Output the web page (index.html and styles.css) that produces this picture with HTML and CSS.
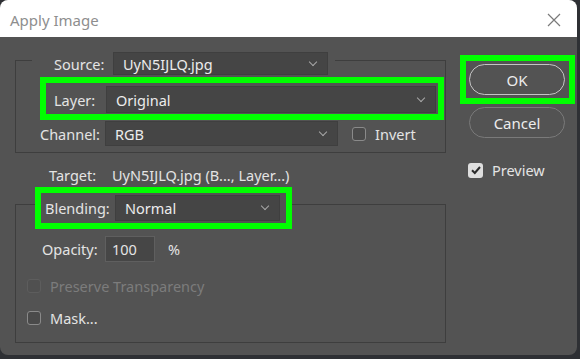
FILE: index.html
```html
<!DOCTYPE html>
<html lang="en">
<head>
  <meta charset="UTF-8" />
  <title>Apply Image</title>
  <link rel="stylesheet" href="styles.css">
</head>
<body>
  <div class="dialog">
    <div class="titlebar">
      <span class="title">Apply Image</span>
      <svg class="close" width="16" height="16" viewBox="0 0 16 16">
        <path d="M2 2 L14 14 M14 2 L2 14" stroke="#7a7a7a" stroke-width="1.2" fill="none" />
      </svg>
    </div>

    <div class="content">
      <div class="left">
        <!-- Source / Layer / Channel -->
        <div class="group group-source">
          <div class="legend-row">
            <span class="label">Source:</span>
            <div class="select select-source">UyN5IJLQ.jpg<span class="chev"></span></div>
          </div>
          <div class="hl hl-layer">
            <span class="label">Layer:</span>
            <div class="select select-layer">Original<span class="chev"></span></div>
          </div>
          <div class="row row-channel">
            <span class="label">Channel:</span>
            <div class="select select-channel">RGB<span class="chev"></span></div>
            <span class="box"></span>
            <span class="check-text">Invert</span>
          </div>
        </div>

        <div class="target">
          <span class="label">Target:</span>
          <span class="value">UyN5IJLQ.jpg (B..., Layer...)</span>
        </div>

        <!-- Blending -->
        <div class="group group-blend">
          <div class="hl hl-blend">
            <span class="label">Blending:</span>
            <div class="select select-blend">Normal<span class="chev"></span></div>
          </div>
          <div class="row row-opacity">
            <span class="label">Opacity:</span>
            <div class="input">100</div>
            <span class="pct">%</span>
          </div>
          <div class="check check-preserve disabled">
            <span class="box"></span>
            <span class="check-text">Preserve Transparency</span>
          </div>
          <div class="check check-mask">
            <span class="box"></span>
            <span class="check-text">Mask...</span>
          </div>
        </div>
      </div>

      <div class="right">
        <div class="hl hl-ok">
          <button class="btn btn-ok">OK</button>
        </div>
        <button class="btn btn-cancel">Cancel</button>
        <div class="check check-preview">
          <span class="box checked">
            <svg width="12" height="12" viewBox="0 0 12 12">
              <path d="M2 6.2 L4.8 9 L10 3" stroke="#2a2a2a" stroke-width="2" fill="none" />
            </svg>
          </span>
          <span class="check-text">Preview</span>
        </div>
      </div>
    </div>
  </div>
</body>
</html>
```

FILE: styles.css
```css
html, body {
  margin: 0;
  padding: 0;
}

body {
  background-color: #2e3034;
  font-family: "Noto Sans", "Open Sans", sans-serif;
  font-size: 14.5px;
  color: #e4e4e4;
}

.dialog {
  width: 577px;
  height: 355px;
  background-color: #535353;
  border-radius: 8px 8px 8px 8px;
  overflow: hidden;
}

.titlebar {
  height: 37px;
  background-color: #ffffff;
  display: flex;
  align-items: center;
  justify-content: space-between;
  padding: 0 15px 0 10px;
  box-sizing: border-box;
}

.title {
  color: #8e8e8e;
  font-size: 15px;
  margin-top: 2px;
}

.close {
  margin-top: 2px;
}

.content {
  display: flex;
}

.left {
  width: 460px;
}

.right {
  display: flex;
  flex-direction: column;
  align-items: flex-start;
}

.label {
  white-space: nowrap;
}

/* group boxes */
.group {
  margin-left: 15px;
  width: 431px;
  border: 1px solid #3e3e3e;
  box-sizing: border-box;
}

.group-source {
  margin-top: 23px;
  padding-bottom: 6px;
}

.legend-row {
  display: flex;
  align-items: center;
  margin: -9px 0 0 16px;
  width: 303px;
  height: 23px;
  padding-left: 22px;
  box-sizing: border-box;
  background-color: #535353;
}

.legend-row .label {
  width: 59px;
}

/* selects */
.select {
  position: relative;
  height: 23px;
  background-color: #454545;
  border: 1px solid #3f3f3f;
  box-sizing: border-box;
  padding-left: 9px;
  display: flex;
  align-items: center;
  color: #ececec;
}

.chev {
  position: absolute;
  right: 11px;
  top: 50%;
  width: 5px;
  height: 5px;
  margin-top: -5px;
  border-right: 1.2px solid #a8a8a8;
  border-bottom: 1.2px solid #a8a8a8;
  transform: rotate(45deg);
}

.select-source {
  width: 215px;
}

/* green highlight boxes */
.hl {
  border: 6px solid #00ff00;
  background-color: #535353;
  box-sizing: border-box;
  display: flex;
  align-items: center;
}

.hl-layer {
  margin: 2px 0 0 24px;
  width: 404px;
  height: 43px;
  padding: 2px 0 0 8px;
}

.hl-layer .label {
  width: 52px;
}

.select-layer {
  width: 330px;
  height: 27px;
}

.row {
  display: flex;
  align-items: center;
}

.row-channel {
  margin: 1px 0 0 24px;
  height: 25px;
}

.row-channel .label {
  width: 65px;
}

.select-channel {
  width: 233px;
  height: 25px;
}

.row-channel .box {
  margin-left: 14px;
}

.row-channel .check-text {
  margin-left: 9px;
}

/* target */
.target {
  margin: 12px 0 0 49px;
  height: 20px;
  display: flex;
  align-items: center;
}

.target .label {
  width: 63px;
}

/* blending group */
.group-blend {
  margin-top: 19px;
  height: 139px;
}

.hl-blend {
  margin: -18px 0 0 19px;
  width: 257px;
  height: 42px;
  padding: 0 0 0 4px;
}

.hl-blend .label {
  width: 70px;
}

.select-blend {
  width: 165px;
  height: 26px;
}

.row-opacity {
  margin: 7px 0 0 26px;
}

.row-opacity .label {
  width: 63px;
}

.input {
  width: 50px;
  height: 26px;
  box-sizing: border-box;
  background-color: #464646;
  border: 1px solid #5f5f5f;
  padding-left: 6px;
  display: flex;
  align-items: center;
}

.pct {
  margin-left: 13px;
}

/* checkboxes */
.check {
  display: flex;
  align-items: center;
  height: 20px;
}

.box {
  width: 14px;
  height: 14px;
  border: 1px solid #8a8a8a;
  border-radius: 3px;
  background-color: #4a4a4a;
  box-sizing: border-box;
  display: flex;
  align-items: center;
  justify-content: center;
}

.check .check-text {
  margin-left: 9px;
}

.check-preserve {
  margin: 14px 0 0 11px;
}

.check-mask {
  margin: 12px 0 0 11px;
}

.disabled {
  color: #7c7c7c;
}

.disabled .box {
  border-color: #5d5d5d;
  background-color: #505050;
}

.box.checked {
  width: 15px;
  height: 15px;
  border: none;
  background-color: #dedede;
}

/* buttons */
.hl-ok {
  margin-top: 18px;
  width: 115px;
  height: 49px;
  padding-left: 3px;
}

.btn {
  font-family: "Noto Sans", "Open Sans", sans-serif;
  font-size: 15px;
  color: #ececec;
  background-color: #535353;
  width: 96px;
  height: 31px;
  border-radius: 16px;
  padding: 0;
  cursor: pointer;
}

.btn-ok {
  border: 1.5px solid #c4c4c4;
}

.btn-cancel {
  margin: 3px 0 0 9px;
  border: 1px solid #7a7a7a;
}

.check-preview {
  margin: 22px 0 0 8px;
}
```
